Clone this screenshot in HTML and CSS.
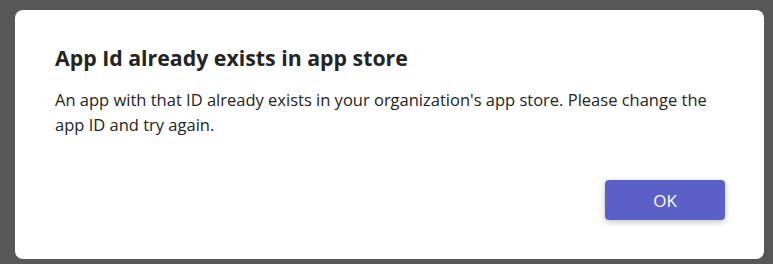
FILE: index.html
```html
<!DOCTYPE html>
<html lang="en">
<head>
<meta charset="utf-8">
<title>App Id already exists</title>
<link rel="stylesheet" href="styles.css">
</head>
<body>
  <div class="dialog" role="dialog" aria-labelledby="dlg-title">
    <h2 class="dialog-title" id="dlg-title">App Id already exists in app store</h2>
    <p class="dialog-body">An app with that ID already exists in your organization's app store. Please change the app ID and try again.</p>
    <div class="dialog-actions">
      <button class="btn-primary" type="button">OK</button>
    </div>
  </div>
</body>
</html>
```
FILE: styles.css
```css
html, body {
  margin: 0;
  height: 100%;
}
body {
  background: #575757;
  box-sizing: border-box;
  padding: 10px 9px 5px 15px;
  font-family: "Open Sans", "Noto Sans", sans-serif;
  color: #242424;
}
.dialog {
  box-sizing: border-box;
  height: 249px;
  background: #ffffff;
  border-radius: 8px;
  padding: 34px 39px 39px 40px;
  display: flex;
  flex-direction: column;
}
.dialog-title {
  margin: 0;
  font-size: 21.3px;
  line-height: 28px;
  font-weight: 700;
}
.dialog-body {
  margin: 15px 0 0;
  font-size: 16.5px;
  line-height: 25px;
  max-width: 670px;
}
.dialog-actions {
  margin-top: auto;
  display: flex;
  justify-content: flex-end;
}
.btn-primary {
  width: 120px;
  height: 40px;
  border: none;
  border-radius: 4px;
  background: #5b5fc7;
  color: #ffffff;
  font-family: inherit;
  font-size: 17px;
  box-shadow: 0 2px 6px rgba(0,0,0,0.25);
}
```
